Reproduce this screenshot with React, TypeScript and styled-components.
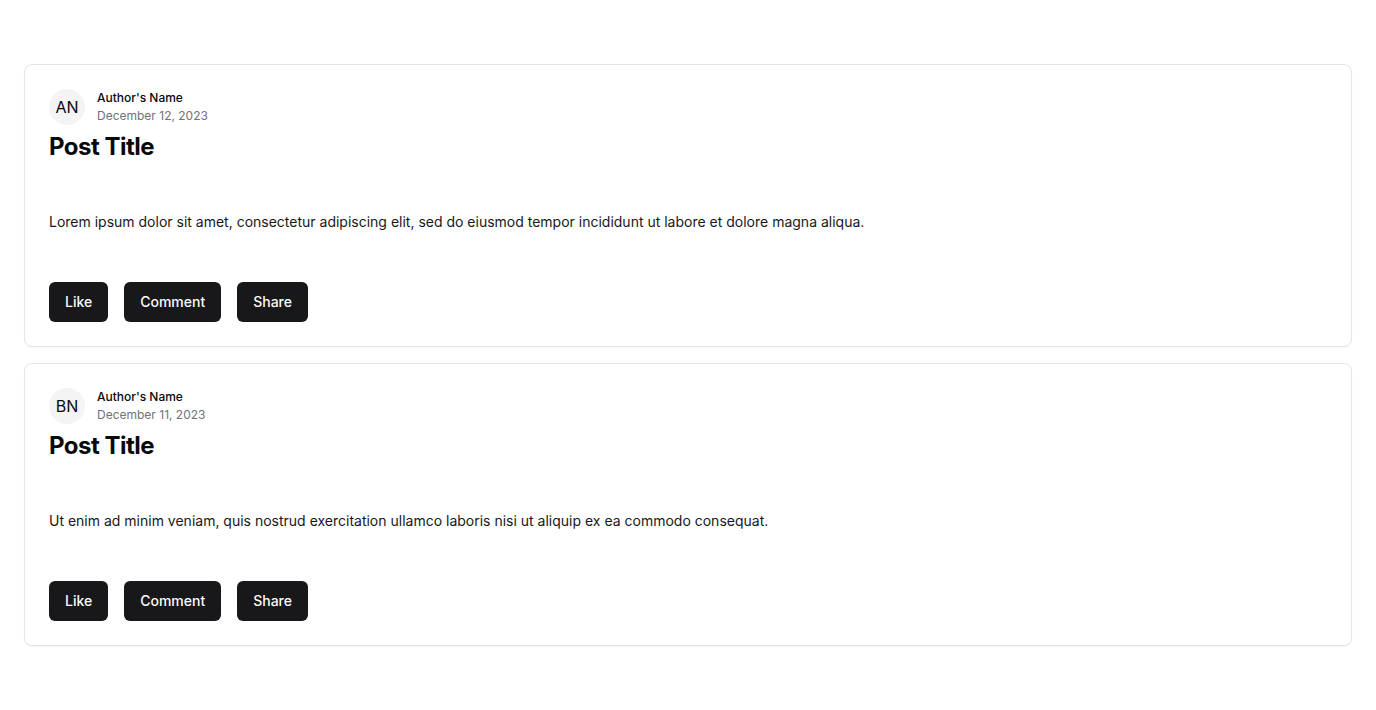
import React from "react";
import styled, { createGlobalStyle } from "styled-components";

const Global = createGlobalStyle`
  * { box-sizing: border-box; }
  body { margin: 0; background: #ffffff; font-family: Inter, "Noto Sans", sans-serif; color: #09090b; }
`;

const Page = styled.div`
  padding: 64px 24px 24px;
  display: flex;
  flex-direction: column;
  gap: 16px;
`;

const Card = styled.article`
  border: 1px solid #e4e4e7;
  border-radius: 8px;
  background: #fff;
  box-shadow: 0 1px 2px rgba(0, 0, 0, 0.04);
  padding: 24px;
  display: flex;
  flex-direction: column;
`;

const AuthorRow = styled.div`
  display: flex;
  align-items: flex-start;
  gap: 12px;
`;

const Avatar = styled.div`
  width: 36px;
  height: 36px;
  border-radius: 50%;
  background: #f4f4f5;
  display: flex;
  align-items: center;
  justify-content: center;
  font-size: 16px;
  color: #09090b;
`;

const Meta = styled.div`
  display: flex;
  flex-direction: column;
  gap: 2px;
  padding-top: 1px;
`;

const Name = styled.div`
  font-size: 12px;
  line-height: 16px;
  font-weight: 500;
`;

const DateText = styled.div`
  font-size: 12px;
  line-height: 16px;
  color: #71717a;
`;

const Title = styled.h2`
  margin: 6px 0 0;
  font-size: 24px;
  line-height: 32px;
  font-weight: 700;
  letter-spacing: -0.5px;
`;

const Body = styled.p`
  margin: 49px 0 0;
  font-size: 14px;
  line-height: 20px;
  color: #18181b;
`;

const Actions = styled.div`
  display: flex;
  gap: 16px;
  margin-top: 50px;
`;

const Button = styled.button`
  height: 40px;
  padding: 0 16px 1px;
  border: none;
  border-radius: 6px;
  background: #18181b;
  color: #fafafa;
  font-family: inherit;
  font-size: 14px;
  line-height: 20px;
  font-weight: 500;
  display: flex;
  align-items: center;
  cursor: pointer;
`;

const posts = [
  {
    initials: "AN",
    date: "December 12, 2023",
    body: "Lorem ipsum dolor sit amet, consectetur adipiscing elit, sed do eiusmod tempor incididunt ut labore et dolore magna aliqua.",
  },
  {
    initials: "BN",
    date: "December 11, 2023",
    body: "Ut enim ad minim veniam, quis nostrud exercitation ullamco laboris nisi ut aliquip ex ea commodo consequat.",
  },
];

export default function App() {
  return (
    <>
      <Global />
      <Page>
        {posts.map((p) => (
          <Card key={p.initials}>
            <AuthorRow>
              <Avatar>{p.initials}</Avatar>
              <Meta>
                <Name>Author's Name</Name>
                <DateText>{p.date}</DateText>
              </Meta>
            </AuthorRow>
            <Title>Post Title</Title>
            <Body>{p.body}</Body>
            <Actions>
              <Button>Like</Button>
              <Button>Comment</Button>
              <Button>Share</Button>
            </Actions>
          </Card>
        ))}
      </Page>
    </>
  );
}
